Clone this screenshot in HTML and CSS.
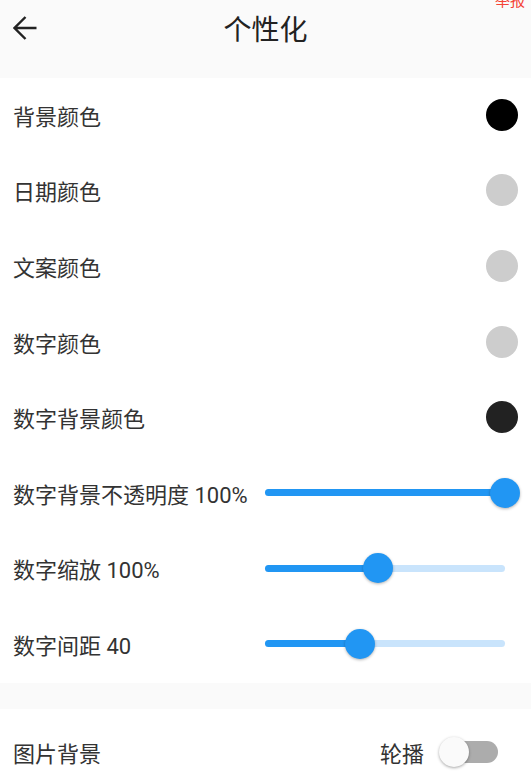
FILE: index.html
```
<!DOCTYPE html>
<html lang="zh-CN">
<head>
	<meta charset="UTF-8">
	<title>个性化</title>
	<meta name="viewport" content="width=device-width, initial-scale=1">
	<link rel="stylesheet" href="styles.css">
</head>
<body>
<header class="appbar">
	<button class="back" type="button" aria-label="返回">
		<svg viewBox="0 0 24 24" width="24" height="24"><path d="M23.5 12H1.5M12.5 1L1.5 12L12.5 23" fill="none" stroke="#222" stroke-width="2.4"/></svg>
	</button>
	<h1 class="title">个性化</h1>
	<span class="report">举报</span>
</header>

<main>
	<section class="group">
		<div class="row"><span class="label">背景颜色</span><span class="swatch swatch-black"></span></div>
		<div class="row"><span class="label">日期颜色</span><span class="swatch swatch-grey"></span></div>
		<div class="row"><span class="label">文案颜色</span><span class="swatch swatch-grey"></span></div>
		<div class="row"><span class="label">数字颜色</span><span class="swatch swatch-grey"></span></div>
		<div class="row"><span class="label">数字背景颜色</span><span class="swatch swatch-dark"></span></div>
		<div class="row">
			<span class="label">数字背景不透明度 100%</span>
			<div class="slider"><div class="fill" style="width: 100%"></div><div class="thumb" style="left: 100%"></div></div>
		</div>
		<div class="row">
			<span class="label">数字缩放 100%</span>
			<div class="slider"><div class="fill" style="width: 47%"></div><div class="thumb" style="left: 47%"></div></div>
		</div>
		<div class="row">
			<span class="label">数字间距 40</span>
			<div class="slider"><div class="fill" style="width: 39.5%"></div><div class="thumb" style="left: 39.5%"></div></div>
		</div>
	</section>

	<section class="group">
		<div class="row row-tall">
			<span class="label">图片背景</span>
			<label class="toggle">轮播<span class="switch"><span class="knob"></span></span></label>
		</div>
	</section>
</main>
</body>
</html>
```

FILE: styles.css
```
*,
::before,
::after {
	box-sizing: border-box;
}
body {
	margin: 0;
	background: #fafafa;
	color: #333;
	font-family: Roboto, "Noto Sans CJK SC", sans-serif;
	font-size: 22px;
}
.appbar {
	position: relative;
	height: 56px;
	display: grid;
	grid-template-columns: 1fr auto 1fr;
	align-items: center;
	padding-inline: 13px;
	margin-bottom: 22px;
}
.back {
	justify-self: start;
	display: flex;
	padding: 0;
	border: 0;
	background: none;
}
.title {
	margin: 0;
	font-size: 28px;
	font-weight: 400;
	color: #222;
}
.report {
	position: absolute;
	top: -11px;
	right: 6px;
	font-size: 15px;
	color: #f44336;
}
.group {
	background: #fff;
	margin-bottom: 26px;
}
.row {
	height: 75.6px;
	display: flex;
	align-items: center;
	justify-content: space-between;
	padding: 0 13px 2px;
}
.row-tall {
	height: 88px;
}
.swatch {
	width: 32px;
	height: 32px;
	border-radius: 50%;
}
.swatch-black {
	background: #000;
}
.swatch-grey {
	background: #cdcdcd;
}
.swatch-dark {
	background: #222;
}
.slider {
	position: relative;
	width: 240px;
	height: 7px;
	margin-right: 13px;
	border-radius: 4px;
	background: #c9e4fc;
}
.fill {
	height: 100%;
	border-radius: 4px;
	background: #2196f3;
}
.thumb {
	position: absolute;
	top: 50%;
	width: 30px;
	height: 30px;
	border-radius: 50%;
	background: #2196f3;
	box-shadow: 0 1px 3px rgba(0, 0, 0, 0.3);
	transform: translate(-50%, -50%);
}
.toggle {
	display: flex;
	align-items: center;
	gap: 14px;
	color: #333;
}
.switch {
	position: relative;
	width: 53px;
	height: 22px;
	margin-left: 7px;
	margin-right: 20px;
	border-radius: 11px;
	background: #acacac;
}
.knob {
	position: absolute;
	top: 50%;
	left: -6px;
	width: 30px;
	height: 30px;
	border-radius: 50%;
	background: #fafafa;
	box-shadow: 0 1px 3px rgba(0, 0, 0, 0.35);
	transform: translateY(-50%);
}
```
